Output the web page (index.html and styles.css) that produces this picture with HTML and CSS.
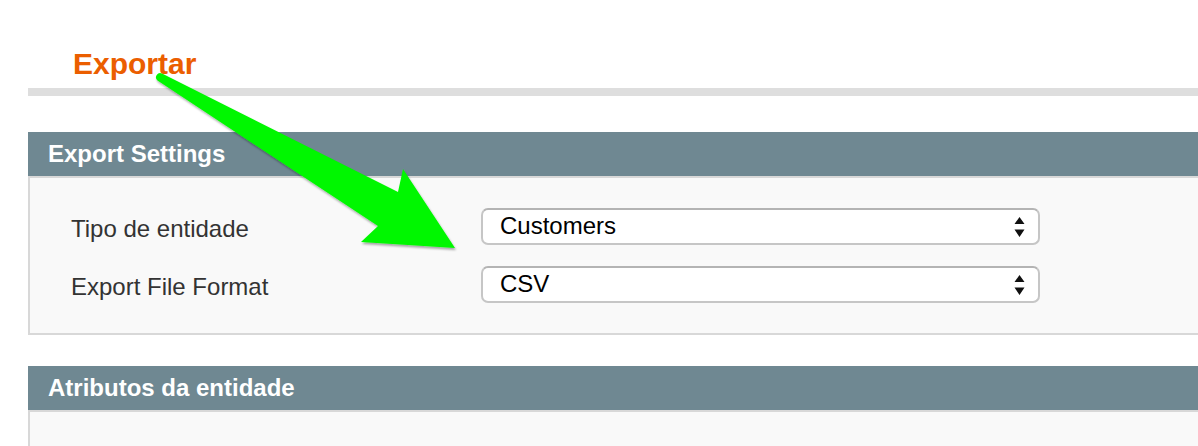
FILE: index.html
```html
<!DOCTYPE html>
<html lang="pt">
<head>
    <meta charset="UTF-8">
    <meta name="viewport" content="width=device-width, initial-scale=1.0">
    <title>Exportar</title>
    <link rel="stylesheet" href="styles.css">
</head>
<body>
    <div class="page">
        <div class="page-head">
            <h1 class="page-title">Exportar</h1>
        </div>

        <div class="panel">
            <div class="panel-title">Export Settings</div>
            <div class="panel-body">
                <div class="form-row">
                    <label class="form-label">Tipo de entidade</label>
                    <div class="select">
                        <span class="select-value">Customers</span>
                        <svg class="select-arrows" width="11" height="20" viewBox="0 0 11 20">
                            <path d="M0.5 7 L5.5 0 L10.5 7 Z M0.5 12.5 L10.5 12.5 L5.5 20 Z" fill="#111"/>
                        </svg>
                    </div>
                </div>
                <div class="form-row">
                    <label class="form-label">Export File Format</label>
                    <div class="select">
                        <span class="select-value">CSV</span>
                        <svg class="select-arrows" width="11" height="20" viewBox="0 0 11 20">
                            <path d="M0.5 7 L5.5 0 L10.5 7 Z M0.5 12.5 L10.5 12.5 L5.5 20 Z" fill="#111"/>
                        </svg>
                    </div>
                </div>
            </div>
        </div>

        <div class="panel">
            <div class="panel-title">Atributos da entidade</div>
            <div class="panel-body panel-body-empty"></div>
        </div>
    </div>

    <!-- seta de anotação por cima da página -->
    <svg class="annotation" width="1198" height="446" viewBox="0 0 1198 446">
        <defs>
            <filter id="arrow-shadow" x="-10%" y="-10%" width="130%" height="130%">
                <feDropShadow dx="1" dy="2" stdDeviation="1.2" flood-color="#000" flood-opacity="0.35"/>
            </filter>
        </defs>
        <path d="M162 73.5 L398 192 L403 169 L455 248 L361 242 L378 226 L157.5 80.5 A4.2 4.2 0 0 1 162 73.5 Z"
              fill="#00f700" filter="url(#arrow-shadow)"/>
    </svg>
</body>
</html>
```

FILE: styles.css
```css
/* reset */
html, body {
    margin: 0;
    padding: 0;
}
body {
    overflow: hidden;
    background: #fff;
    font-family: "Liberation Sans", Arial, sans-serif;
}

.page {
    margin-left: 28px;
    margin-right: -20px;
}

.page-head {
    padding-top: 47px;
    border-bottom: 8px solid #dedede;
    margin-bottom: 36px;
}
.page-title {
    margin: 0 0 7px 45px;
    font-size: 30px;
    line-height: 34px;
    font-weight: bold;
    color: #eb5e00;
}

.panel {
    margin-bottom: 31px;
}
.panel-title {
    height: 44px;
    line-height: 44px;
    padding-left: 20px;
    background: #6f8892;
    color: #fff;
    font-size: 24px;
    font-weight: bold;
}
.panel-body {
    background: #f9f9f9;
    border: 2px solid #d8d8d8;
    padding: 30px 0 30px 41px;
    display: flex;
    flex-direction: column;
    gap: 21px;
}
.panel-body-empty {
    height: 80px;
}

.form-row {
    display: flex;
    align-items: flex-start;
    height: 37px;
}
.form-label {
    width: 410px;
    flex-shrink: 0;
    padding-top: 4px;
    line-height: 33px;
    font-size: 24px;
    color: #333;
}

/* select desenhado à mão */
.select {
    width: 559px;
    height: 37px;
    box-sizing: border-box;
    display: flex;
    align-items: center;
    justify-content: space-between;
    padding: 0 13px 0 17px;
    background: #fff;
    border: 2px solid #c6c6c6;
    border-top-color: #b4b4b4;
    border-radius: 7px;
}
.select-value {
    font-size: 24px;
    line-height: 31px;
    padding-bottom: 2px;
    color: #000;
}
.select-arrows {
    display: block;
    margin-top: 1px;
}

.annotation {
    position: absolute;
    top: 0;
    left: 0;
    pointer-events: none;
}
```
